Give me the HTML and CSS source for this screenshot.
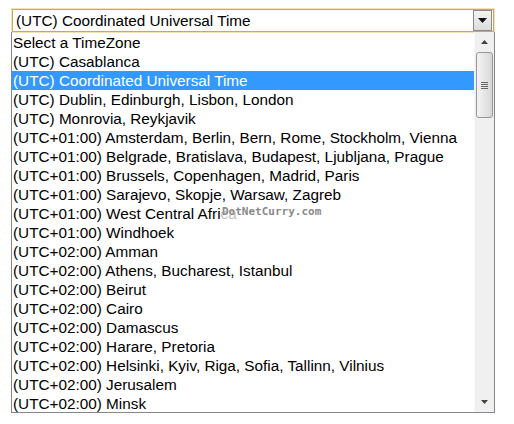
FILE: index.html
```html
<!DOCTYPE html>
<html lang="en">
<head>
  <meta charset="UTF-8">
  <meta name="viewport" content="width=device-width, initial-scale=1.0">
  <title>Time Zones</title>
  <link rel="stylesheet" href="styles.css">
</head>
<body>
  <div class="tz">
    <div class="combo">
      <span class="value">(UTC) Coordinated Universal Time</span>
      <span class="drop-btn">
        <svg width="9" height="5" viewBox="0 0 9 5"><path d="M0 0h9L4.5 5z" fill="#111"/></svg>
      </span>
    </div>
    <div class="list">
      <ul class="options">
        <li>Select a TimeZone</li>
        <li>(UTC) Casablanca</li>
        <li class="selected">(UTC) Coordinated Universal Time</li>
        <li>(UTC) Dublin, Edinburgh, Lisbon, London</li>
        <li>(UTC) Monrovia, Reykjavik</li>
        <li>(UTC+01:00) Amsterdam, Berlin, Bern, Rome, Stockholm, Vienna</li>
        <li>(UTC+01:00) Belgrade, Bratislava, Budapest, Ljubljana, Prague</li>
        <li>(UTC+01:00) Brussels, Copenhagen, Madrid, Paris</li>
        <li>(UTC+01:00) Sarajevo, Skopje, Warsaw, Zagreb</li>
        <li>(UTC+01:00) West Central Africa</li>
        <li>(UTC+01:00) Windhoek</li>
        <li>(UTC+02:00) Amman</li>
        <li>(UTC+02:00) Athens, Bucharest, Istanbul</li>
        <li>(UTC+02:00) Beirut</li>
        <li>(UTC+02:00) Cairo</li>
        <li>(UTC+02:00) Damascus</li>
        <li>(UTC+02:00) Harare, Pretoria</li>
        <li>(UTC+02:00) Helsinki, Kyiv, Riga, Sofia, Tallinn, Vilnius</li>
        <li>(UTC+02:00) Jerusalem</li>
        <li>(UTC+02:00) Minsk</li>
      </ul>
      <div class="scrollbar">
        <span class="arrow">
          <svg width="7" height="4" viewBox="0 0 7 4"><path d="M0 4h7L3.5 0z" fill="#444"/></svg>
        </span>
        <div class="track">
          <div class="thumb">
            <span class="grip"></span>
          </div>
        </div>
        <span class="arrow">
          <svg width="7" height="4" viewBox="0 0 7 4"><path d="M0 0h7L3.5 4z" fill="#444"/></svg>
        </span>
      </div>
    </div>
  </div>
  <span class="watermark">DotNetCurry.com</span>
</body>
</html>
```

FILE: styles.css
```css
body {
  margin: 0;
  background: #ffffff;
  font-family: 'Liberation Sans', Arial, sans-serif;
  font-size: 15.3px;
  color: #000;
}
.tz {
  padding: 9px 0 0 12px;
  width: 482px;
}
.combo {
  height: 21px;
  border: 1px solid #c9a862;
  box-shadow: 0 0 0 1px #f3e2b4;
  display: flex;
  align-items: center;
  justify-content: space-between;
  background: #fff;
}
.combo .value {
  padding-left: 3px;
  line-height: 19px;
}
.drop-btn {
  width: 17px;
  height: 19px;
  margin-right: 1px;
  border: 1px solid #8a8a8a;
  background: linear-gradient(#f4f4f4, #dcdcdc);
  display: flex;
  align-items: center;
  justify-content: center;
}
.list {
  display: flex;
  border: 1px solid #828790;
  border-top: none;
  height: 380px;
  margin-left: -1px;
  width: 482px;
  overflow: hidden;
}
.options {
  list-style: none;
  margin: 0;
  padding: 1px 0 0;
  flex: 1;
  min-width: 0;
}
.options li {
  height: 19px;
  line-height: 19px;
  padding-left: 1px;
  white-space: nowrap;
  overflow: hidden;
}
.options li.selected {
  background: #3399ff;
  color: #fff;
}
.scrollbar {
  flex-shrink: 0;
  width: 19px;
  background: #f0f0f0;
  display: flex;
  flex-direction: column;
  border-left: 1px solid #f7f7f7;
}
.scrollbar .arrow {
  height: 20px;
  display: flex;
  align-items: center;
  justify-content: center;
}
.track {
  flex: 1;
  padding: 0 1px;
}
.thumb {
  height: 64px;
  border: 1px solid #979797;
  border-radius: 3px;
  background: linear-gradient(to right, #f4f4f4, #e3e3e3 60%, #d6d6d6);
  display: flex;
  align-items: center;
  justify-content: center;
}
.grip {
  width: 7px;
  height: 7px;
  background: repeating-linear-gradient(#666 0 1px, transparent 1px 2px);
}
.watermark {
  position: absolute;
  left: 221px;
  top: 205px;
  font-family: 'DejaVu Sans Mono', monospace;
  font-size: 11px;
  font-weight: bold;
  color: #8a8a8a;
  background: rgba(255, 255, 255, 0.75);
  padding: 0 1px;
  line-height: 14px;
}
```
